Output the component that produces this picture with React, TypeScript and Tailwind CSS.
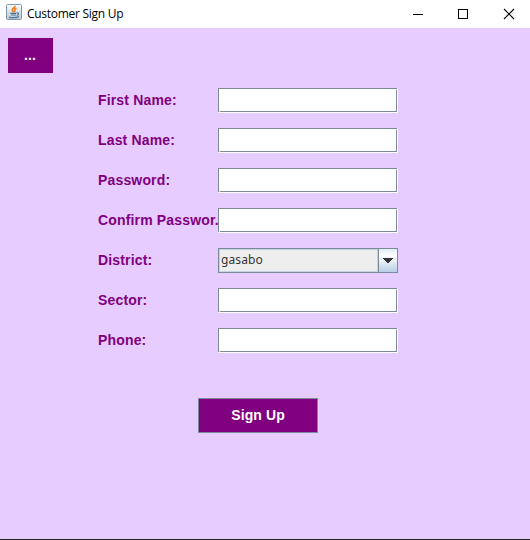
import React from "react";

function JavaIcon() {
  return (
    <svg width="16" height="16" viewBox="0 0 16 16" className="ml-1.5 shrink-0">
      <defs>
        <linearGradient id="tile" x1="0" y1="0" x2="0" y2="1">
          <stop offset="0" stopColor="#fbfcfd" />
          <stop offset="1" stopColor="#b9c8d6" />
        </linearGradient>
      </defs>
      <rect x="0.5" y="0.5" width="15" height="15" rx="1" fill="url(#tile)" stroke="#8195a8" />
      <path d="M9.2 1.8C9.6 3.8 5.2 4.4 6.3 6.5L7.8 8.3M10.6 4.2C8.2 5 8 5.8 9 6.8L8.4 8.4" fill="none" stroke="#ef8424" strokeWidth="1.6" />
      <path d="M4.2 9.3H10M5 11H10M10.3 9C13.4 8.2 13 10.9 10.8 11.5M3 12.9C4.5 14 10 14 12.8 12.6" fill="none" stroke="#4d7898" strokeWidth="1.2" />
    </svg>
  );
}

function TitleBar() {
  return (
    <header className="flex h-7 shrink-0 items-center bg-white pb-1">
      <JavaIcon />
      <span className="ml-[5px] mt-[3px] grow whitespace-nowrap font-['Open_Sans','Noto_Sans',sans-serif] text-[12px] leading-4 tracking-[-0.28px] text-black">
        Customer Sign Up
      </span>
      <svg width="130" height="24" viewBox="0 0 130 24" fill="none" stroke="#000" className="mt-1 shrink-0">
        <path d="M13 12.5H23" shapeRendering="crispEdges" />
        <rect x="58.5" y="7.5" width="9" height="9" shapeRendering="crispEdges" />
        <path d="M104 7L114 17M114 7L104 17" strokeWidth="1.1" />
      </svg>
    </header>
  );
}

function TextField({ label }: { label: string }) {
  return (
    <span className="relative block h-[25px] w-[180px] shrink-0 border-b border-r border-white">
      <input aria-label={label} className="block h-6 w-[179px] border border-[#7a8a99] bg-white px-0.5 text-[13px] outline-none" />
      <i className="absolute bottom-[-1px] left-0 size-px bg-[#eeeeee]" />
      <i className="absolute bottom-0 left-px size-px bg-[#eeeeee]" />
      <i className="absolute right-[-1px] top-0 size-px bg-[#eeeeee]" />
      <i className="absolute right-0 top-px size-px bg-[#eeeeee]" />
    </span>
  );
}

function ComboBox({ value }: { value: string }) {
  return (
    <button className="flex h-[25px] w-[180px] shrink-0 border border-[#7a8a99] bg-[#eeeeee] text-left">
      <span className="h-[23px] grow border border-[#c3d3e2] pl-px font-['Noto_Sans',sans-serif] text-[12px] leading-[19px] tracking-[0.12px] text-[#333333]">
        {value}
      </span>
      <span className="flex h-[23px] w-[19px] shrink-0 items-center justify-center border-l border-[#7a8a99] bg-linear-to-b from-[#e4edf5] via-white via-30% to-[#b8cfe5]">
        <svg width="10" height="5" viewBox="0 0 10 5">
          <path d="M0 0H10V1H9V2H8V3H7V4H6V5H4V4H3V3H2V2H1V1H0Z" fill="#333" shapeRendering="crispEdges" />
        </svg>
      </span>
    </button>
  );
}

const rows = [
  { label: "First Name:" },
  { label: "Last Name:" },
  { label: "Password:" },
  { label: "Confirm Passwor." },
  { label: "District:", value: "gasabo" },
  { label: "Sector:" },
  { label: "Phone:" },
];

export default function App() {
  return (
    <div className="flex h-[540px] w-[530px] flex-col overflow-hidden border-b border-[#222] bg-[#e6ccff] font-['Liberation_Sans',Arial,sans-serif]">
      <TitleBar />
      <main className="flex flex-col items-start pt-2.5">
        <button className="ml-2 h-[35px] w-[45px] bg-[#800080] pr-px text-[14px] font-bold leading-[35px] tracking-[0.1px] text-white">...</button>
        <form className="ml-[98px] mt-[15px] flex flex-col gap-[15px]">
          {rows.map((row) => (
            <div key={row.label} className="flex h-[25px]">
              <label className="w-[120px] overflow-hidden whitespace-nowrap text-[14px] font-bold leading-[25px] tracking-[0.16px] text-[#800080]">
                {row.label}
              </label>
              {row.value ? <ComboBox value={row.value} /> : <TextField label={row.label} />}
            </div>
          ))}
        </form>
        <button className="ml-[198px] mt-[45px] h-[35px] w-[120px] border border-[#7a8a99] bg-[#800080] text-[14px] font-bold leading-[33px] tracking-[0.1px] text-white">
          Sign Up
        </button>
      </main>
    </div>
  );
}
